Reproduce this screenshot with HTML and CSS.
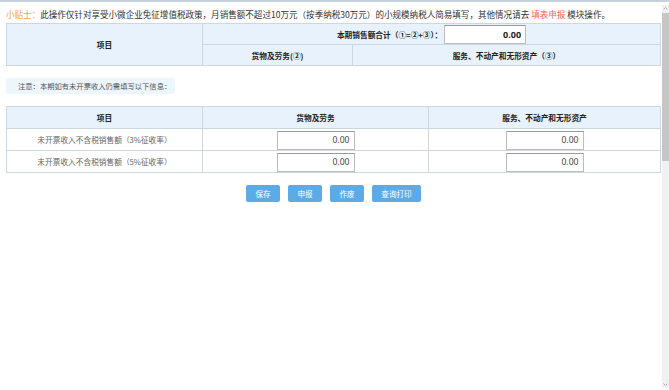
FILE: index.html
```html
<!DOCTYPE html>
<html lang="zh-CN">
<head>
  <meta charset="UTF-8">
  <meta name="viewport" content="width=device-width, initial-scale=1.0">
  <title>小规模纳税人简易申报</title>
  <link rel="stylesheet" href="styles.css">
</head>
<body>
  <div class="page">
    <div class="main">
      <p class="tip"><span class="tip-label">小贴士：</span>此操作仅针对享受小微企业免征增值税政策，月销售额不超过10万元（按季纳税30万元）的小规模纳税人简易填写，其他情况请去 <a class="tip-link">填表申报</a> 模块操作。</p>

      <table class="grid grid-summary">
        <colgroup>
          <col class="col-item">
          <col class="col-goods-top">
          <col>
        </colgroup>
        <tr class="row-head">
          <th rowspan="2">项目</th>
          <th colspan="2">
            <span class="total-label">本期销售额合计（①=②+③）：</span><input class="amount amount-total" type="text" value="0.00">
          </th>
        </tr>
        <tr class="row-head">
          <th>货物及劳务(②)</th>
          <th>服务、不动产和无形资产（③）</th>
        </tr>
      </table>

      <div class="notice">注意：本期如有未开票收入仍需填写以下信息：</div>

      <table class="grid grid-detail">
        <colgroup>
          <col class="col-item">
          <col class="col-goods">
          <col>
        </colgroup>
        <tr class="row-head">
          <th>项目</th>
          <th>货物及劳务</th>
          <th>服务、不动产和无形资产</th>
        </tr>
        <tr>
          <td class="item">未开票收入不含税销售额（3%征收率）</td>
          <td><input class="amount" type="text" value="0.00"></td>
          <td><input class="amount" type="text" value="0.00"></td>
        </tr>
        <tr>
          <td class="item">未开票收入不含税销售额（5%征收率）</td>
          <td><input class="amount" type="text" value="0.00"></td>
          <td><input class="amount" type="text" value="0.00"></td>
        </tr>
      </table>

      <div class="actions">
        <button class="btn" type="button">保存</button>
        <button class="btn" type="button">申报</button>
        <button class="btn" type="button">作废</button>
        <button class="btn btn-wide" type="button">查询打印</button>
      </div>
    </div>

    <div class="scrollbar">
      <svg class="arrow" width="7" height="7" viewBox="0 0 7 7"><path d="M1.5 4.5 L3.5 2.5 L5.5 4.5" fill="none" stroke="#a0a0a0" stroke-width="0.8"/></svg>
      <div class="track"><div class="thumb"></div></div>
      <svg class="arrow" width="7" height="7" viewBox="0 0 7 7"><path d="M1.5 2.5 L3.5 4.5 L5.5 2.5" fill="none" stroke="#a0a0a0" stroke-width="0.8"/></svg>
    </div>
  </div>
</body>
</html>
```

FILE: styles.css
```css
:root {
  --head-bg: #e8f2fc;
  --line: #cfd6de;
  --text: #333333;
  --muted: #666666;
  --btn-bg: #5cabe6;
}
* { box-sizing: border-box; }
html, body {
  margin: 0;
  height: 100%;
  background: #ffffff;
}
body {
  font-family: "Noto Sans CJK SC", "Noto Sans", sans-serif;
  color: var(--text);
}
.page {
  display: flex;
  height: 390px;
  border-top: 2px solid #c3d2de;
  overflow: hidden;
}
.main {
  flex: 1;
  padding: 0 1px 0 6px;
}
.tip {
  margin: 0;
  padding-top: 4px;
  height: 21px;
  line-height: 17px;
  font-size: 8.55px;
  white-space: nowrap;
}
.tip-label { color: #f0a53c; }
.tip-link { color: #f2665f; }

.grid {
  width: 655px;
  border-collapse: collapse;
  table-layout: fixed;
  font-size: 7.7px;
}
.grid th, .grid td {
  border: 1px solid var(--line);
  padding: 0;
  text-align: center;
}
.grid th { font-weight: bold; color: #222; }
.row-head { background: var(--head-bg); }
.col-item { width: 196px; }
.col-goods-top { width: 150px; }
.col-goods { width: 226px; }

.grid-summary tr:first-child { height: 21px; }
.grid-summary tr:last-child { height: 21px; }
.total-label { vertical-align: middle; }

.amount {
  width: 78px;
  height: 19px;
  margin: 1px 0 0;
  padding: 0 4px 0 0;
  border: 1px solid #bdbdbd;
  border-top-color: #9a9a9a;
  background: #ffffff;
  text-align: right;
  font: 8.6px "Noto Sans", "Noto Sans CJK SC", sans-serif;
  color: #444;
  vertical-align: middle;
}
.amount-total {
  width: 82px;
  margin: 0 0 0 2px;
  font-weight: bold;
  font-size: 9px;
  color: #222;
}

.notice {
  display: inline-block;
  margin-top: 12px;
  padding: 0 8px 0 12px;
  width: 169px;
  height: 16px;
  line-height: 16px;
  border-radius: 3px;
  background: #edf5fd;
  color: #555;
  font-size: 7.3px;
  white-space: nowrap;
}

.grid-detail {
  margin-top: 12px;
}
.grid-detail tr { height: 22px; }
.item {
  color: var(--muted);
  font-weight: normal;
}

.actions {
  display: flex;
  justify-content: center;
  gap: 8px;
  margin-top: 12px;
}
.btn {
  width: 34px;
  height: 17px;
  padding: 0;
  border: none;
  border-radius: 2px;
  background: var(--btn-bg);
  color: #ffffff;
  font-family: "Noto Sans CJK SC", sans-serif;
  font-size: 7.6px;
}
.btn-wide { width: 49px; }

.scrollbar {
  width: 7px;
  margin-top: 3px;
  margin-bottom: 2px;
  display: flex;
  flex-direction: column;
  background: #f1f1f1;
}
.arrow { display: block; flex: none; }
.track {
  flex: 1;
  padding-top: 1px;
}
.thumb {
  width: 7px;
  height: 148px;
  background: #c6c6c6;
}
```
